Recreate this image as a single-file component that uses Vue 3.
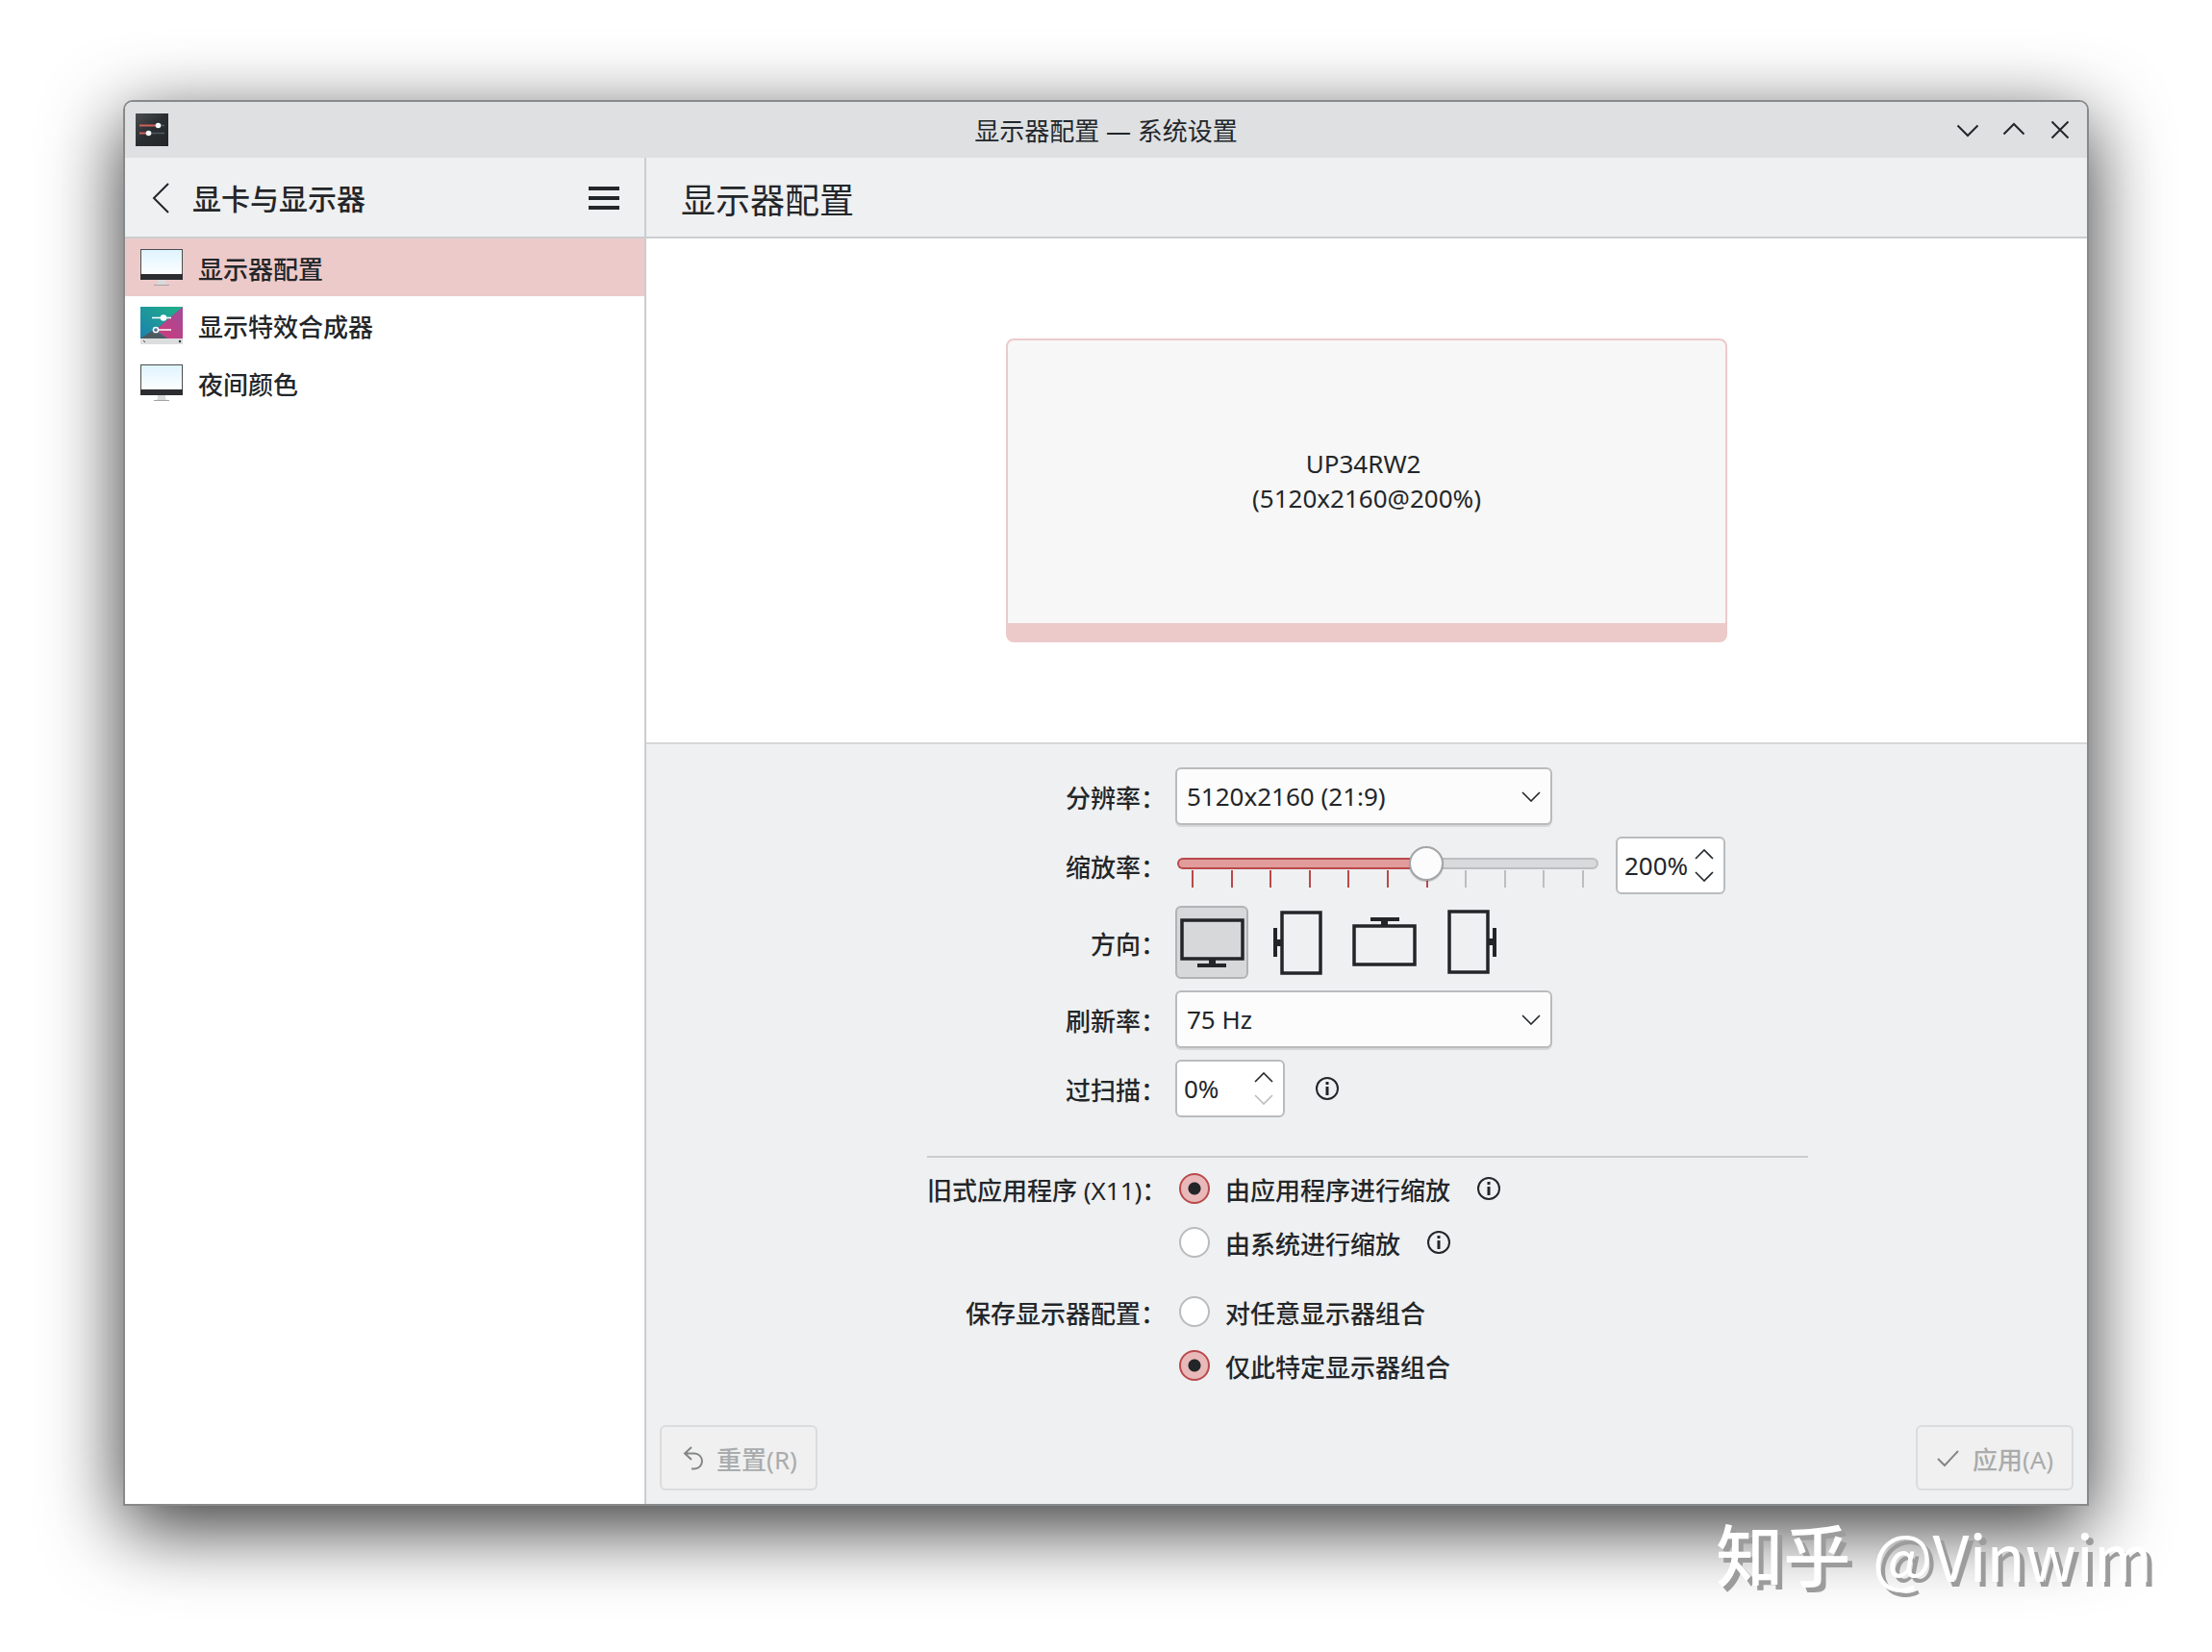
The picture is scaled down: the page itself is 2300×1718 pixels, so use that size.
<script setup>
import { computed, ref } from 'vue' ;

const modules = [
	{ id: 'kscreen', title: '显示器配置', icon: 'monitor' },
	{ id: 'compositor', title: '显示特效合成器', icon: 'effects' },
	{ id: 'nightcolor', title: '夜间颜色', icon: 'monitor' }
] ;

const current = ref( 'kscreen' ) ;

const orientations = [
	{ angle: 0, title: '无旋转' },
	{ angle: 90, title: '顺时针 90°' },
	{ angle: 180, title: '颠倒' },
	{ angle: 270, title: '逆时针 90°' }
] ;

const outputLabel = 'UP34RW2 \n(5120x2160@200%)' ;

const resolution = ref( '5120x2160' ) ;
const refreshRate = ref( '75' ) ;
const orientation = ref( 0 ) ;
const overscan = ref( 0 ) ;
const legacyScaling = ref( 'app' ) ;
const retention = ref( 'individual' ) ;

// Scale goes from 50% to 300%, one tick every 25%
const SCALE_MIN = 50 ;
const SCALE_MAX = 300 ;
const SCALE_STEP = 25 ;
const scale = ref( 200 ) ;

const ticks = [] ;
for ( let v = SCALE_MIN ; v <= SCALE_MAX ; v += SCALE_STEP ) { ticks.push( v ) ; }

const fill = computed( () => ( 100 * ( scale.value - SCALE_MIN ) / ( SCALE_MAX - SCALE_MIN ) ) + '%' ) ;

function stepScale( d ) {
	scale.value = Math.min( SCALE_MAX, Math.max( SCALE_MIN, scale.value + d * SCALE_STEP ) ) ;
}

function stepOverscan( d ) {
	overscan.value = Math.min( 100, Math.max( 0, overscan.value + d ) ) ;
}
</script>

<template>
	<div class="desktop">
		<div class="window">
			<header class="titlebar">
				<svg class="app-icon" viewBox="0 0 34 34">
					<defs>
						<linearGradient id="app-bg" x1="0" y1="0" x2="1" y2="1">
							<stop offset="0" stop-color="#4b4e50" />
							<stop offset="0.5" stop-color="#2b2e31" />
							<stop offset="1" stop-color="#232629" />
						</linearGradient>
					</defs>
					<rect width="34" height="34" fill="url(#app-bg)" />
					<path d="M22 12.500H30M14 20.500H30" stroke="#4d5a5e" stroke-width="1.500" />
					<path d="M4 12.500H23M4 20.500H13" stroke="#d0605e" stroke-width="2" />
					<circle cx="23.500" cy="12.500" r="2.800" fill="#fff" />
					<circle cx="13.500" cy="20.500" r="2.800" fill="#fff" />
				</svg>
				<span class="window-title">显示器配置 — 系统设置</span>
				<div class="window-buttons">
					<button type="button" aria-label="最小化">
						<svg viewBox="0 0 24 24"><path d="M1.500 7.500L12 18L22.500 7.500" /></svg>
					</button>
					<button type="button" aria-label="最大化">
						<svg viewBox="0 0 24 24"><path d="M1.500 16.500L12 6L22.500 16.500" /></svg>
					</button>
					<button type="button" aria-label="关闭">
						<svg viewBox="0 0 24 24"><path d="M3.500 3.500L20.500 20.500M20.500 3.500L3.500 20.500" /></svg>
					</button>
				</div>
			</header>

			<div class="body">
				<aside class="sidebar">
					<div class="sidebar-head">
						<button type="button" class="back" aria-label="返回">
							<svg viewBox="0 0 18 32"><path d="M17 1L2 16L17 31" /></svg>
						</button>
						<h2>显卡与显示器</h2>
						<button type="button" class="menu" aria-label="菜单">
							<svg viewBox="0 0 32 24"><path d="M0 2H32M0 12H32M0 22H32" /></svg>
						</button>
					</div>
					<nav>
						<a v-for="m in modules" :key="m.id" href="#" :class="{ active: m.id === current }" @click.prevent="current = m.id">
							<svg v-if="m.icon === 'monitor'" viewBox="0 0 44 40">
								<defs>
									<linearGradient :id="'screen-' + m.id" x1="0" y1="0" x2="0" y2="1">
										<stop offset="0" stop-color="#dff4ff" />
										<stop offset="1" stop-color="#fcfeff" />
									</linearGradient>
								</defs>
								<path d="M18 33H26V37L28 38H16L18 37Z" fill="#d9dadb" />
								<rect x="14" y="38" width="16" height="1" fill="#a3a4a6" />
								<rect y="1" width="44" height="32" fill="#4a4d50" />
								<rect x="1" y="2" width="42" height="25" :fill="'url(#screen-' + m.id + ')'" />
								<rect y="27" width="44" height="6" fill="#2b2d30" />
							</svg>
							<svg v-else viewBox="0 0 44 40">
								<defs>
									<linearGradient id="fx-teal" x1="0" y1="1" x2="1" y2="0">
										<stop offset="0" stop-color="#1d7fb0" />
										<stop offset="1" stop-color="#1fb286" />
									</linearGradient>
									<linearGradient id="fx-pink" x1="0" y1="1" x2="1" y2="0">
										<stop offset="0" stop-color="#d03a78" />
										<stop offset="1" stop-color="#a04c9c" />
									</linearGradient>
								</defs>
								<rect y="1" width="44" height="33" fill="url(#fx-teal)" />
								<path d="M44 1V34H28L16 25Z" fill="url(#fx-pink)" />
								<path d="M0 34L14 25L28 34Z" fill="#4d5a60" />
								<rect y="34" width="44" height="6" fill="#dcdddf" />
								<path d="M3 36L5 38" stroke="#444" />
								<circle cx="41" cy="37" r="1.200" fill="#333" />
								<path d="M12 12.500H32M18 25H32" stroke="#fff" stroke-width="1.500" />
								<circle cx="24" cy="12.500" r="3.300" fill="#fff" />
								<circle cx="16" cy="25" r="2.600" fill="none" stroke="#fff" stroke-width="1.500" />
							</svg>
							<span>{{ m.title }}</span>
						</a>
					</nav>
				</aside>

				<main class="content">
					<div class="content-head">
						<h1>显示器配置</h1>
					</div>

					<div class="preview">
						<div class="output">{{ outputLabel }}</div>
					</div>

					<form class="settings" @submit.prevent>
						<div class="form">
							<div class="row">
								<label class="label" for="resolution">分辨率：</label>
								<div class="combo">
									<select id="resolution" v-model="resolution">
										<option value="5120x2160">5120x2160 (21:9)</option>
										<option value="3840x2160">3840x2160 (16:9)</option>
										<option value="2560x1080">2560x1080 (21:9)</option>
									</select>
									<svg viewBox="0 0 20 11"><path d="M1 1L10 10L19 1" /></svg>
								</div>
							</div>

							<div class="row">
								<label class="label" for="scale">缩放率：</label>
								<div class="slider">
									<div class="ticks">
										<i v-for="t in ticks" :key="t" :class="{ on: t <= scale }" />
									</div>
									<input id="scale" v-model.number="scale" type="range" :min="SCALE_MIN" :max="SCALE_MAX" :step="SCALE_STEP" />
								</div>
								<div class="spin scale-spin">
									<input type="text" aria-label="缩放率" :value="scale + '%'" />
									<div class="arrows">
										<button type="button" aria-label="增加" @click="stepScale(1)">
											<svg viewBox="0 0 20 11"><path d="M1 10L10 1L19 10" /></svg>
										</button>
										<button type="button" aria-label="减少" @click="stepScale(-1)">
											<svg viewBox="0 0 20 11"><path d="M1 1L10 10L19 1" /></svg>
										</button>
									</div>
								</div>
							</div>

							<div class="row" role="group" aria-labelledby="orientation-label">
								<span id="orientation-label" class="label">方向：</span>
								<div class="orientations">
									<button
										v-for="o in orientations"
										:key="o.angle"
										type="button"
										:aria-label="o.title"
										:class="{ checked: o.angle === orientation }"
										@click="orientation = o.angle"
									>
										<svg viewBox="0 0 64 64">
											<g :transform="'rotate(' + o.angle + ' 32 32)'">
												<rect x="1" y="9" width="63" height="40" />
												<path d="M29 50H36V54H47V58H17V54H29Z" />
											</g>
										</svg>
									</button>
								</div>
							</div>

							<div class="row">
								<label class="label" for="refresh">刷新率：</label>
								<div class="combo">
									<select id="refresh" v-model="refreshRate">
										<option value="75">75 Hz</option>
										<option value="60">60 Hz</option>
									</select>
									<svg viewBox="0 0 20 11"><path d="M1 1L10 10L19 1" /></svg>
								</div>
							</div>

							<div class="row">
								<label class="label" for="overscan">过扫描：</label>
								<div class="spin">
									<input id="overscan" type="text" :value="overscan + '%'" />
									<div class="arrows">
										<button type="button" aria-label="增加" @click="stepOverscan(1)">
											<svg viewBox="0 0 20 11"><path d="M1 10L10 1L19 10" /></svg>
										</button>
										<button type="button" aria-label="减少" :disabled="overscan === 0" @click="stepOverscan(-1)">
											<svg viewBox="0 0 20 11"><path d="M1 1L10 10L19 1" /></svg>
										</button>
									</div>
								</div>
								<button type="button" class="info after-spin" aria-label="说明">
									<svg viewBox="0 0 24 24"><circle cx="12" cy="12" r="11" /><path d="M12 5V8M12 10V19" /></svg>
								</button>
							</div>

							<hr />

							<div class="row option">
								<span class="label">旧式应用程序 <span class="latin">(X11)</span>：</span>
								<label><input v-model="legacyScaling" type="radio" name="legacy" value="app" /><span>由应用程序进行缩放</span></label>
								<button type="button" class="info" aria-label="说明">
									<svg viewBox="0 0 24 24"><circle cx="12" cy="12" r="11" /><path d="M12 5V8M12 10V19" /></svg>
								</button>
							</div>
							<div class="row option">
								<span class="label" />
								<label><input v-model="legacyScaling" type="radio" name="legacy" value="system" /><span>由系统进行缩放</span></label>
								<button type="button" class="info" aria-label="说明">
									<svg viewBox="0 0 24 24"><circle cx="12" cy="12" r="11" /><path d="M12 5V8M12 10V19" /></svg>
								</button>
							</div>

							<div class="row option spaced">
								<span class="label">保存显示器配置：</span>
								<label><input v-model="retention" type="radio" name="retention" value="any" /><span>对任意显示器组合</span></label>
							</div>
							<div class="row option">
								<span class="label" />
								<label><input v-model="retention" type="radio" name="retention" value="individual" /><span>仅此特定显示器组合</span></label>
							</div>
						</div>

						<footer class="actions">
							<button type="button" disabled>
								<svg viewBox="0 0 24 26"><path d="M12 2L5 8.500L12 15M5 8.500H15A8 8 0 0 1 15 24.500H12" /></svg>
								<span>重置<span class="latin">(R)</span></span>
							</button>
							<button type="submit" disabled>
								<svg viewBox="0 0 24 26"><path d="M2 14L9 21L23 6" /></svg>
								<span>应用<span class="latin">(A)</span></span>
							</button>
						</footer>
					</form>
				</main>
			</div>
		</div>

		<div class="watermark"><span>知乎</span> @Vinwim</div>
	</div>
</template>

<style>
body {
	margin: 0;
	background: #fff;
}
</style>

<style scoped>
.desktop {
	position: relative;
	display: flex;
	box-sizing: border-box;
	min-height: 100vh;
	padding: 104px 128px 152px;
	overflow: hidden;
	color: #232629;
	font-family: "Noto Sans", "Noto Sans CJK SC", sans-serif;
	font-size: 26px;
	line-height: 36px;
}

button,
input,
select {
	margin: 0;
	padding: 0;
	border: none;
	background: none;
	color: inherit;
	font: inherit;
}

svg {
	display: block;
	flex-shrink: 0;
}

button path,
button circle,
.combo path {
	fill: none;
	stroke: currentColor;
	stroke-width: 2;
}

.label,
nav span,
.option label span,
.actions button > span {
	padding-top: 3px;
	font-weight: 500;
}

.label .latin,
.actions .latin {
	font-weight: 400;
}

.window {
	flex: 1;
	display: flex;
	flex-direction: column;
	min-width: 0;
	border: 2px solid #87898b;
	border-radius: 10px 10px 0 0;
	background: #eff0f1;
	box-shadow: 0 22px 80px rgba(0, 0, 0, 0.8);
}

.titlebar {
	display: grid;
	grid-template-columns: 1fr auto 1fr;
	align-items: center;
	height: 58px;
	padding: 0 11px;
	border-radius: 8px 8px 0 0;
	background: #dee0e2;
}

.app-icon {
	width: 34px;
	height: 34px;
}

.window-title {
	padding-top: 2px;
}

.window-buttons {
	display: flex;
	justify-content: flex-end;
	gap: 24px;
	margin-right: 5px;
}

.window-buttons svg {
	width: 24px;
	height: 24px;
}

.body {
	flex: 1;
	display: flex;
}

.sidebar {
	display: flex;
	flex-direction: column;
	box-sizing: border-box;
	width: 542px;
	border-right: 2px solid #cbcdcf;
	background: #fff;
}

.sidebar-head {
	display: flex;
	align-items: center;
	box-sizing: border-box;
	height: 84px;
	padding: 2px 26px 0 28px;
	border-bottom: 2px solid #cbcdcf;
	background: #eff0f1;
}

.sidebar-head h2 {
	flex: 1;
	margin: 0 0 0 24px;
	padding-top: 2px;
	font-size: 30px;
	font-weight: 500;
}

.back svg {
	width: 18px;
	height: 32px;
}

.menu svg {
	width: 32px;
	height: 24px;
}

.menu path {
	stroke-width: 4;
}

nav a {
	display: flex;
	align-items: center;
	gap: 16px;
	height: 60px;
	padding: 0 16px;
	color: inherit;
	text-decoration: none;
}

nav a.active {
	background: #edcaca;
}

nav svg {
	width: 44px;
	height: 40px;
}

.content {
	flex: 1;
	display: flex;
	flex-direction: column;
	min-width: 0;
}

.content-head {
	display: flex;
	align-items: center;
	box-sizing: border-box;
	height: 84px;
	padding: 8px 36px 0;
	border-bottom: 2px solid #cbcdcf;
}

h1 {
	margin: 0;
	font-size: 36px;
	font-weight: 400;
}

.preview {
	display: flex;
	align-items: center;
	justify-content: center;
	height: 524px;
	border-bottom: 2px solid #d5d7d9;
	background: #fff;
}

.output {
	display: flex;
	align-items: center;
	justify-content: center;
	box-sizing: border-box;
	width: 750px;
	height: 316px;
	padding-bottom: 2px;
	border: 2px solid #edcaca;
	border-bottom-width: 20px;
	border-radius: 8px;
	background: #f7f7f7;
	text-align: center;
	white-space: break-spaces;
}

.settings {
	flex: 1;
	display: flex;
	flex-direction: column;
	justify-content: space-between;
	padding: 24px 14px 14px;
}

.form {
	display: flex;
	flex-direction: column;
	align-self: center;
	gap: 12px;
	width: 916px;
	margin-left: 2px;
}

.row {
	display: flex;
	align-items: center;
}

.label {
	flex-shrink: 0;
	width: 248px;
	margin-right: 10px;
	text-align: right;
	white-space: nowrap;
}

.combo {
	display: grid;
	align-items: center;
	width: 392px;
}

.combo select,
.combo svg {
	grid-area: 1 / 1;
}

.combo select {
	box-sizing: border-box;
	height: 60px;
	padding: 0 48px 0 10px;
	border: 2px solid #b9bbbd;
	border-radius: 6px;
	background: #fcfcfc;
	box-shadow: 0 2px 0 #d6d7d9;
	appearance: none;
}

.combo svg {
	justify-self: end;
	width: 20px;
	height: 11px;
	margin-right: 12px;
	pointer-events: none;
}

.combo path,
.arrows path {
	stroke-width: 1.6;
}

.slider {
	display: grid;
	width: 442px;
	height: 60px;
}

.slider > * {
	grid-area: 1 / 1;
}

.ticks {
	display: flex;
	justify-content: space-between;
	padding: 35px 17px 0;
}

.ticks i {
	width: 2px;
	height: 18px;
	background: #bcbec0;
}

.ticks i.on {
	background: #b9494b;
}

.slider input {
	width: 442px;
	height: 56px;
	appearance: none;
}

.slider input::-webkit-slider-runnable-track {
	box-sizing: border-box;
	height: 12px;
	margin: 0 2px;
	border: 2px solid transparent;
	border-radius: 6px;
	background:
		linear-gradient(90deg, #e39c9c v-bind(fill), #d8dadb v-bind(fill)) padding-box,
		linear-gradient(90deg, #b9494b v-bind(fill), #bcbec0 v-bind(fill)) border-box;
}

.slider input::-webkit-slider-thumb {
	box-sizing: border-box;
	width: 36px;
	height: 36px;
	margin-top: -14px;
	border: 2px solid #a3a5a7;
	border-radius: 50%;
	background: #fcfcfc;
	box-shadow: 0 1px 1px rgba(0, 0, 0, 0.2);
	appearance: none;
}

.spin {
	display: flex;
	align-items: center;
	box-sizing: border-box;
	width: 114px;
	height: 60px;
	padding: 0 10px 0 7px;
	border: 2px solid #b9bbbd;
	border-radius: 6px;
	background: #fff;
}

.scale-spin {
	margin-left: 16px;
}

.spin input {
	flex: 1;
	min-width: 0;
	outline: none;
}

.arrows {
	display: flex;
	flex-direction: column;
	gap: 12px;
}

.arrows svg {
	width: 20px;
	height: 11px;
}

.arrows button:disabled {
	color: #b9bbbd;
}

.orientations {
	display: flex;
	gap: 14px;
}

.orientations button {
	box-sizing: border-box;
	padding: 4px;
	border: 2px solid transparent;
	border-radius: 6px;
}

.orientations button.checked {
	border-color: #b1b3b5;
	background: #d6d8da;
}

.orientations svg {
	width: 64px;
	height: 64px;
	overflow: visible;
}

.orientations rect {
	fill: none;
	stroke: currentColor;
	stroke-width: 3.5;
}

.orientations path {
	fill: currentColor;
	stroke: none;
}

.info {
	margin-left: 28px;
}

.info.after-spin {
	margin-left: 32px;
}

.info svg {
	width: 24px;
	height: 24px;
}

.info path {
	stroke-width: 3;
}

hr {
	width: 100%;
	margin: 28px 0 -2px;
	border: none;
	border-top: 2px solid #cbcdcf;
}

.option {
	height: 44px;
}

.option.spaced {
	margin-top: 16px;
}

.option label {
	display: flex;
	align-items: center;
	gap: 16px;
}

.option input {
	box-sizing: border-box;
	width: 32px;
	height: 32px;
	margin-left: 4px;
	border: 2px solid #b9bbbd;
	border-radius: 50%;
	background: #fff;
	appearance: none;
}

.option input:checked {
	border-color: #b9494b;
	background: radial-gradient(circle, #232629 6px, #e9b9b9 7px);
}

.actions {
	display: flex;
	justify-content: space-between;
}

.actions button {
	display: flex;
	align-items: center;
	justify-content: center;
	gap: 14px;
	box-sizing: border-box;
	width: 164px;
	height: 68px;
	border: 2px solid #dadcdd;
	border-radius: 6px;
	background: #f0f0f0;
	color: #a9abac;
}

.actions svg {
	width: 24px;
	height: 26px;
	color: #838587;
}

.watermark {
	position: absolute;
	right: 62px;
	bottom: 54px;
	color: #fff;
	font-family: "Noto Sans CJK SC", sans-serif;
	font-size: 66px;
	line-height: 96px;
	text-shadow: 5px 5px 0 #9c9c9c;
}

.watermark span {
	margin-right: 8px;
	font-size: 70px;
	font-weight: 500;
}
</style>
